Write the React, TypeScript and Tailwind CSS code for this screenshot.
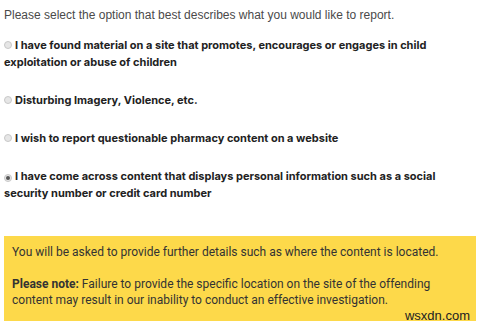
import { useState } from "react";

const options = [
  "I have found material on a site that promotes, encourages or engages in child exploitation or abuse of children",
  "Disturbing Imagery, Violence, etc.",
  "I wish to report questionable pharmacy content on a website",
  "I have come across content that displays personal information such as a social security number or credit card number",
];

// Report options page
const App = () => {
  const [selected, setSelected] = useState(3);

  return (
    <div className="relative w-[480px] h-[326px] overflow-hidden bg-white font-['Inter',sans-serif]">
      <p className="pl-[4px] pt-[7px] text-[12px] leading-[17px] text-[#4a4a4a] font-['Liberation_Sans',sans-serif]">
        Please select the option that best describes what you would like to report.
      </p>

      <div className="flex flex-col gap-[21px] mt-[13px] pl-[4px] pr-[25px]">
        {options.map((label, i) => (
          <label key={i} className="block text-[11px] leading-[17px] font-bold text-[#222] cursor-pointer">
            <span
              onClick={() => setSelected(i)}
              className="inline-flex items-center justify-center w-[8px] h-[8px] mr-[3px] rounded-full border border-[#c8c8c8] bg-[#e6e6e6] align-[0px]"
            >
              {selected === i && <span className="w-[4px] h-[4px] rounded-full bg-[#555]" />}
            </span>
            {label}
          </label>
        ))}
      </div>

      <div className="mx-[4px] mt-[34px] bg-[#fdd94a] pl-[8px] pr-[20px] pt-[8px] pb-[13px] text-[12px] leading-[16px] text-[#333] font-['Roboto',sans-serif]">
        <p>You will be asked to provide further details such as where the content is located.</p>
        <p className="mt-[16px]">
          <span className="font-bold">Please note:</span> Failure to provide the specific location on the site of the offending content may result in our inability to conduct an effective investigation.
        </p>
      </div>

      <span className="absolute right-[10px] bottom-[1px] text-[13px] text-[#222] font-['Liberation_Sans',sans-serif]">
        wsxdn.com
      </span>
    </div>
  );
};

export default App;
